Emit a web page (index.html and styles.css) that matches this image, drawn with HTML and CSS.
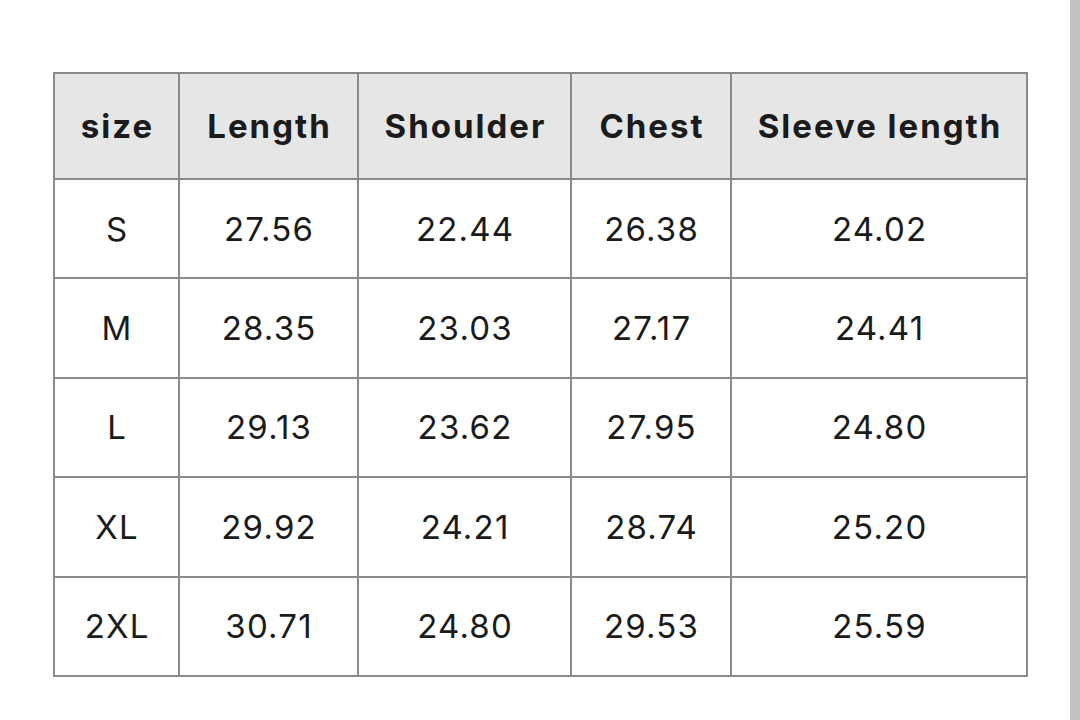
FILE: index.html
```html
<!DOCTYPE html>
<html>
<head>
<meta charset="utf-8">
<link rel="stylesheet" href="styles.css">
</head>
<body>
<div class="page">
  <main class="content">
    <table class="size-table">
      <colgroup>
        <col class="c1"><col class="c2"><col class="c3"><col class="c4"><col class="c5">
      </colgroup>
      <thead>
        <tr><th>size</th><th>Length</th><th>Shoulder</th><th>Chest</th><th>Sleeve length</th></tr>
      </thead>
      <tbody>
        <tr><td>S</td><td>27.56</td><td>22.44</td><td>26.38</td><td>24.02</td></tr>
        <tr><td>M</td><td>28.35</td><td>23.03</td><td>27.17</td><td>24.41</td></tr>
        <tr><td>L</td><td>29.13</td><td>23.62</td><td>27.95</td><td>24.80</td></tr>
        <tr><td>XL</td><td>29.92</td><td>24.21</td><td>28.74</td><td>25.20</td></tr>
        <tr><td>2XL</td><td>30.71</td><td>24.80</td><td>29.53</td><td>25.59</td></tr>
      </tbody>
    </table>
  </main>
  <div class="scrollbar"></div>
</div>
</body>
</html>
```
FILE: styles.css
```css
html, body {
  margin: 0;
  padding: 0;
  background: #ffffff;
}
.page {
  display: flex;
  width: 1080px;
  height: 720px;
  overflow: hidden;
}
.content {
  flex: 1;
  padding: 72px 0 0 53px;
}
.scrollbar {
  width: 10px;
  height: 720px;
  background: #c1c1c1;
}
.size-table {
  border-collapse: collapse;
  table-layout: fixed;
  width: 975px;
  font-family: Inter, "Liberation Sans", sans-serif;
  color: #1b1b1b;
}
.c1 { width: 125px; }
.c2 { width: 179px; }
.c3 { width: 213px; }
.c4 { width: 160px; }
.c5 { width: 296px; }
.size-table th,
.size-table td {
  border: 2px solid #8a8a8a;
  text-align: center;
  vertical-align: middle;
  padding: 0;
}
.size-table th {
  background: #e6e6e6;
  height: 104px;
  font-size: 33px;
  font-weight: 700;
  letter-spacing: 2px;
  padding-left: 2px;
}
.size-table td {
  height: 97.4px;
  font-size: 33px;
  font-weight: 400;
  letter-spacing: 1.2px;
  padding-left: 1.2px;
}
```
